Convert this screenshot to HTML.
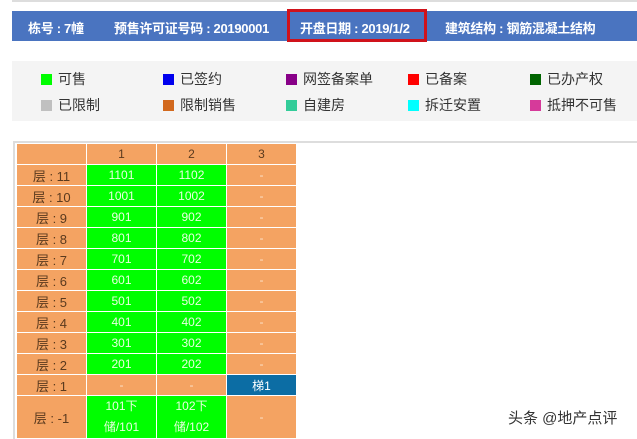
<!DOCTYPE html>
<html><head><meta charset="utf-8"><style>
*{margin:0;padding:0;box-sizing:border-box}
body{width:637px;height:439px;background:#fff;font-family:"Liberation Sans","Noto Sans CJK SC",sans-serif;position:relative;overflow:hidden}
.topline{position:absolute;left:12px;top:0;width:625px;height:2px;background:#ddd}
.bar{position:absolute;left:12px;top:11px;width:625px;height:30px;background:#4a74c0;color:#fff;font-weight:bold;font-size:13px;letter-spacing:-0.3px}
.bar span{position:absolute;top:7px;white-space:nowrap}
.red{position:absolute;left:287px;top:9px;width:140px;height:33px;border:3px solid #d0121b}
.leg{position:absolute;left:12px;top:61px;width:625px;height:60px;background:#f4f4f4;font-size:14px;color:#333}
.li{position:absolute;white-space:nowrap}
.li i{display:inline-block;width:11px;height:11px;vertical-align:-1px;margin-right:6px}
.frame{position:absolute;left:13px;top:141px;width:624px;height:298px;border-left:2px solid #ddd;border-top:2px solid #ddd}
table{position:absolute;left:16px;top:143px;border-collapse:collapse;font-size:12px}
td{border:1px solid #fff;text-align:center;height:21px;padding:0;background:#f4a362;color:#5a3a1e}
td.l{font-size:13px}
td.g{background:#00fe00;color:#e8ffe0}
td.d{color:#fbe3cc}
td.b{background:#0c6da4;color:#fff}
.wm{position:absolute;left:508px;top:407px;font-size:15px;color:#333}
</style></head><body>
<div class="topline"></div>
<div class="bar">
<span style="left:16px">栋号 : 7幢</span>
<span style="left:102px">预售许可证号码 : 20190001</span>
<span style="left:288px">开盘日期 : 2019/1/2</span>
<span style="left:433px">建筑结构 : 钢筋混凝土结构</span>
</div>
<div class="red"></div>
<div class="leg">
<div class="li" style="left:29px;top:8px"><i style="background:#00fe00"></i>可售</div>
<div class="li" style="left:151px;top:8px"><i style="background:#0000ee"></i>已签约</div>
<div class="li" style="left:274px;top:8px"><i style="background:#880088"></i>网签备案单</div>
<div class="li" style="left:396px;top:8px"><i style="background:#f00"></i>已备案</div>
<div class="li" style="left:518px;top:8px"><i style="background:#006400"></i>已办产权</div>
<div class="li" style="left:29px;top:34px"><i style="background:#c0c0c0"></i>已限制</div>
<div class="li" style="left:151px;top:34px"><i style="background:#d2691e"></i>限制销售</div>
<div class="li" style="left:274px;top:34px"><i style="background:#33cc99"></i>自建房</div>
<div class="li" style="left:396px;top:34px"><i style="background:#00ffff"></i>拆迁安置</div>
<div class="li" style="left:518px;top:34px"><i style="background:#d63a9a"></i>抵押不可售</div>
</div>
<div class="frame"></div>
<table>
<colgroup><col style="width:70px"><col style="width:70px"><col style="width:70px"><col style="width:70px"></colgroup>
<tr><td></td><td>1</td><td>2</td><td>3</td></tr>
<tr><td class="l">层 : 11</td><td class="g">1101</td><td class="g">1102</td><td class="d">-</td></tr>
<tr><td class="l">层 : 10</td><td class="g">1001</td><td class="g">1002</td><td class="d">-</td></tr>
<tr><td class="l">层 : 9</td><td class="g">901</td><td class="g">902</td><td class="d">-</td></tr>
<tr><td class="l">层 : 8</td><td class="g">801</td><td class="g">802</td><td class="d">-</td></tr>
<tr><td class="l">层 : 7</td><td class="g">701</td><td class="g">702</td><td class="d">-</td></tr>
<tr><td class="l">层 : 6</td><td class="g">601</td><td class="g">602</td><td class="d">-</td></tr>
<tr><td class="l">层 : 5</td><td class="g">501</td><td class="g">502</td><td class="d">-</td></tr>
<tr><td class="l">层 : 4</td><td class="g">401</td><td class="g">402</td><td class="d">-</td></tr>
<tr><td class="l">层 : 3</td><td class="g">301</td><td class="g">302</td><td class="d">-</td></tr>
<tr><td class="l">层 : 2</td><td class="g">201</td><td class="g">202</td><td class="d">-</td></tr>
<tr><td class="l">层 : 1</td><td class="d">-</td><td class="d">-</td><td class="b">梯1</td></tr>
<tr><td class="l" style="height:42px">层 : -1</td><td class="g" style="line-height:21px">101下<br>储/101</td><td class="g" style="line-height:21px">102下<br>储/102</td><td class="d">-</td></tr>
</table>
<div class="wm">头条 @地产点评</div>
</body></html>
